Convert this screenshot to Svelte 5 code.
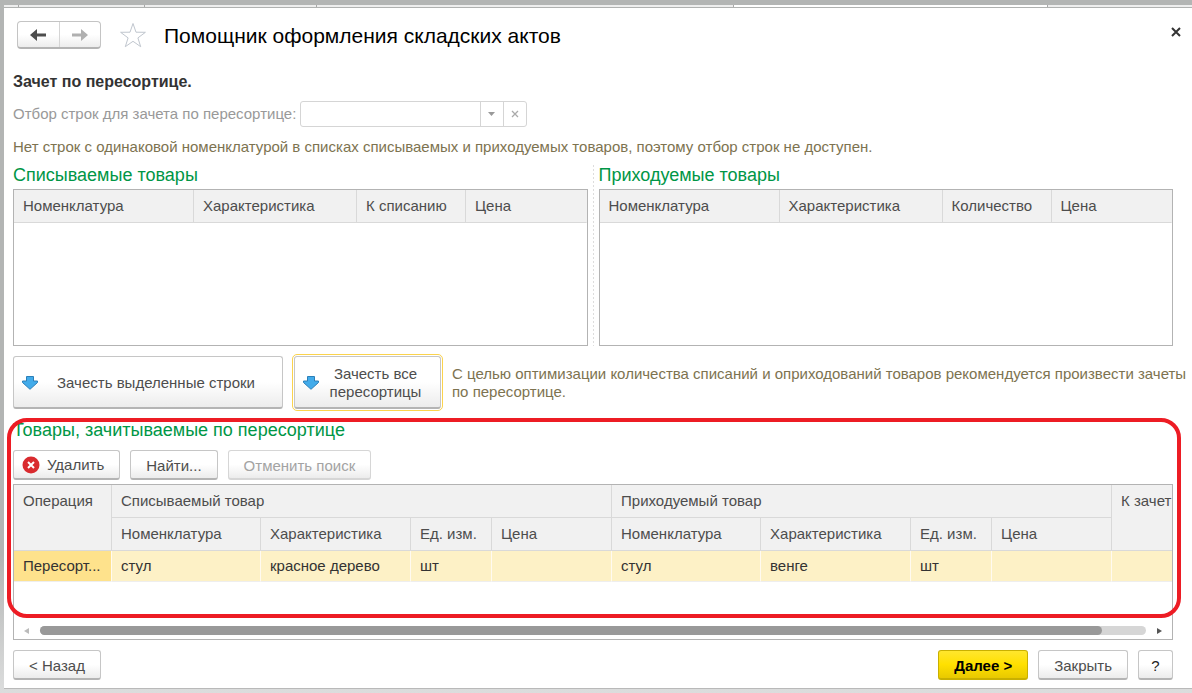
<script>
  const lists = [
    { title: 'Списываемые товары', cols: ['Номенклатура', 'Характеристика', 'К списанию', 'Цена'] },
    { title: 'Приходуемые товары', cols: ['Номенклатура', 'Характеристика', 'Количество', 'Цена'] }
  ];
  const sub = ['Номенклатура', 'Характеристика', 'Ед. изм.', 'Цена'];
  const row = ['Пересорт...', 'стул', 'красное дерево', 'шт', '', 'стул', 'венге', 'шт', '', ''];
</script>

{#snippet arrow()}
  <svg class="arrow" width="16" height="14" viewBox="0 0 16 14" aria-hidden="true">
    <path d="M4.500.5h7V5h4v1.500L8 13.300.5 6.500V5h4z" fill="#42abea" stroke="#2b7fb8" stroke-linejoin="round" />
  </svg>
{/snippet}

<div class="app">
  <div class="tabs" aria-hidden="true"><i></i><i></i><i></i><i></i><i></i></div>
  <main>
    <header>
      <div class="nav">
        <button aria-label="Назад">
          <svg width="16" height="12" viewBox="0 0 16 12"><path d="M0 6L7 0v4.400h9v3.200H7V12z" fill="#4d4d4d" /></svg>
        </button>
        <button aria-label="Вперед" disabled>
          <svg width="16" height="12" viewBox="0 0 16 12"><path d="M16 6L9 0v4.400H0v3.200h9V12z" fill="#b0b0b0" /></svg>
        </button>
      </div>
      <button class="plain star" aria-label="Избранное">
        <svg width="28" height="26" viewBox="0 0 28 26"><path d="M14 1.500l3 8.700 9.400.1-7.500 5.600 2.800 8.800L14 19.300l-7.700 5.400 2.800-8.800L1.600 10.300l9.400-.1z" fill="#fff" stroke="#c0c6ce" /></svg>
      </button>
      <h1>Помощник оформления складских актов</h1>
      <button class="plain close" aria-label="Закрыть окно">
        <svg width="10" height="10" viewBox="0 0 10 10"><path d="M1 1l8 8M9 1L1 9" stroke="#333" stroke-width="2" /></svg>
      </button>
    </header>

    <h2>Зачет по пересортице.</h2>
    <div class="filter">
      <label for="rows">Отбор строк для зачета по пересортице:</label>
      <div class="combo">
        <input id="rows" type="text" disabled />
        <button aria-label="Выбрать" disabled><svg width="8" height="4" viewBox="0 0 8 4"><path d="M0 0h7L3.500 4z" fill="#999" /></svg></button>
        <button aria-label="Очистить" disabled><svg width="8" height="8" viewBox="0 0 8 8"><path d="M1 1l6 6M7 1L1 7" stroke="#aaa" stroke-width="1.300" /></svg></button>
      </div>
    </div>
    <p class="note">Нет строк с одинаковой номенклатурой в списках списываемых и приходуемых товаров, поэтому отбор строк не доступен.</p>

    <div class="lists">
      {#each lists as list}
        <section>
          <h3>{list.title}</h3>
          <div class="grid upper">
            <table>
              <colgroup><col class="name" /><col class="feature" /><col class="count" /><col /></colgroup>
              <thead><tr>{#each list.cols as c}<th>{c}</th>{/each}</tr></thead>
            </table>
          </div>
        </section>
      {/each}
    </div>

    <div class="actions">
      <button class="btn big wide">{@render arrow()}<span>Зачесть выделенные строки</span></button>
      <button class="btn big focus">{@render arrow()}<span>Зачесть все пересортицы</span></button>
      <p class="note hint">С целью оптимизации количества списаний и оприходований товаров рекомендуется произвести зачеты по пересортице.</p>
    </div>

    <section class="result">
      <h3>Товары, зачитываемые по пересортице</h3>
      <div class="toolbar">
        <button class="btn delete">
          <svg width="18" height="18" viewBox="0 0 18 18" aria-hidden="true"><circle cx="9" cy="9" r="8.500" fill="#d92b2f" /><path d="M6 6l6 6M12 6l-6 6" stroke="#fff" stroke-width="2" /></svg>
          Удалить
        </button>
        <button class="btn">Найти...</button>
        <button class="btn" disabled>Отменить поиск</button>
      </div>
      <div class="grid lower">
        <div class="view">
          <table>
            <colgroup>
              <col class="op" />
              <col class="item" /><col class="kind" /><col class="unit" /><col class="price" />
              <col class="item" /><col class="kind" /><col class="unit" /><col class="price" />
              <col class="sum" />
            </colgroup>
            <thead>
              <tr>
                <th rowspan="2">Операция</th>
                <th colspan="4">Списываемый товар</th>
                <th colspan="4">Приходуемый товар</th>
                <th rowspan="2">К зачет</th>
              </tr>
              <tr>{#each [...sub, ...sub] as c}<th>{c}</th>{/each}</tr>
            </thead>
            <tbody><tr>{#each row as c}<td>{c}</td>{/each}</tr></tbody>
          </table>
        </div>
        <div class="scroll" aria-hidden="true">
          <svg width="5" height="6" viewBox="0 0 5 6"><path d="M5 0v6L0 3z" fill="#bbb" /></svg>
          <div class="track"><div class="thumb"></div></div>
          <svg width="5" height="6" viewBox="0 0 5 6"><path d="M0 0v6l5-3z" fill="#555" /></svg>
        </div>
      </div>
      <div class="mark"></div>
    </section>

    <footer>
      <button class="btn">&lt; Назад</button>
      <button class="btn primary">Далее &gt;</button>
      <button class="btn">Закрыть</button>
      <button class="btn help">?</button>
    </footer>
  </main>
</div>

<style>
  :global(body) {
    margin: 0;
    font-family: "Liberation Sans", Arial, sans-serif;
    font-size: 15px;
    line-height: 18px;
    color: #4d4d4d;
  }
  .app, .app * { box-sizing: border-box; }
  .app {
    min-height: 100vh;
    display: flex;
    flex-direction: column;
    padding: 5px 0 4px 4px;
    background: linear-gradient(#b3b5b4 80%, #dcdddd);
  }
  .tabs {
    display: grid;
    grid-template-columns: 15fr 126fr 172fr 417fr 314fr 144fr;
    height: 3px;
    background: #eee;
    border-bottom: 1px solid #b0b2b1;
  }
  .tabs i { border-right: 1px solid #a8a8a8; }
  .tabs i:nth-child(5) { background: #fff; }
  main {
    flex: 1;
    display: flex;
    flex-direction: column;
    padding: 13px 19px 8px 9px;
    background: #fff;
    border-bottom: 1px solid #b9b9b9;
  }
  h1, h2, h3, p { margin: 0; font-weight: 400; }
  button, input { font: inherit; color: inherit; }
  button { padding: 0; }
  header {
    display: flex;
    align-items: center;
    height: 28px;
    padding-left: 4px;
  }
  .nav {
    display: flex;
    width: 84px;
    height: 28px;
    border: 1px solid #c4c4c4;
    border-bottom: 2px solid #b4b4b4;
    border-radius: 4px;
    background: linear-gradient(#fff 50%, #ededed);
  }
  .nav button {
    flex: 1;
    display: grid;
    place-items: center;
    border: 0;
    background: none;
  }
  .nav button + button { border-left: 1px solid #d5d5d5; }
  .plain { display: grid; place-items: center; border: 0; background: none; }
  .star { margin: 0 17px 0 18px; }
  h1 { padding-top: 2px; font-size: 21px; line-height: 28px; color: #000; }
  .close { margin: -7px -8px 0 auto; }
  h2 { margin-top: 24px; font-size: 16px; line-height: 18px; font-weight: 700; color: #333; }
  .filter { display: flex; align-items: center; gap: 4px; margin-top: 10px; color: #999; }
  .combo {
    display: flex;
    width: 227px;
    height: 26px;
    border: 1px solid #d5d5d5;
    border-radius: 3px;
  }
  .combo input { flex: 1; min-width: 0; padding: 0 6px; border: 0; background: none; }
  .combo button {
    display: grid;
    place-items: center;
    width: 23px;
    border: 0;
    border-left: 1px solid #d5d5d5;
    background: none;
  }
  .note { color: #7d7350; }
  .filter + .note { margin-top: 11px; }
  .hint { flex: 1; margin-right: -19px; }
  h3 { font-size: 18px; line-height: 20px; color: #009646; }
  .lists {
    display: grid;
    grid-template-columns: 1fr 1fr;
    gap: 11px;
    margin-top: 9px;
    background: repeating-linear-gradient(#ddd 0 2px, transparent 2px 4px) center / 1px 100% no-repeat;
  }
  .grid { border: 1px solid #b3b3b3; background: #fff; }
  .upper { margin-top: 4px; min-height: 157px; }
  table { width: 100%; table-layout: fixed; border-collapse: separate; border-spacing: 0; }
  th, td {
    height: 33px;
    padding: 0 0 0 9px;
    text-align: left;
    font-weight: 400;
    white-space: nowrap;
    overflow: hidden;
  }
  th {
    padding-top: 7px;
    vertical-align: top;
    background: #f1f1f1;
    border-right: 1px solid #d9d9d9;
    border-bottom: 1px solid #d9d9d9;
  }
  th:last-child { border-right-color: #f1f1f1; }
  .lower thead tr + tr th { border-right-color: #d9d9d9; }
  .name { width: 180px; }
  .feature { width: 163px; }
  .count { width: 109px; }
  .btn {
    display: flex;
    align-items: center;
    justify-content: center;
    height: 30px;
    padding: 2px 15px 0;
    border: 1px solid #c6c6c6;
    border-bottom: 2px solid #b4b4b4;
    border-radius: 3px;
    background: linear-gradient(#fff 50%, #ececec);
    white-space: nowrap;
  }
  .btn:disabled { color: #a3a3a3; border-color: #d6d6d6; }
  .actions { display: flex; align-items: center; gap: 11px; margin-top: 10px; }
  .big { flex: none; height: 53px; padding: 2px 8px 0; }
  .big .arrow { flex: none; }
  .big span { flex: 1; white-space: normal; }
  .wide { width: 270px; }
  .focus { width: 147px; outline: 1px solid #fbd34d; outline-offset: 1px; }
  .result {
    position: relative;
    flex: 1;
    display: flex;
    flex-direction: column;
    margin-top: 11px;
  }
  .toolbar { display: flex; gap: 10px; margin-top: 10px; }
  .delete { gap: 7px; padding: 1px 15px 0 8px; }
  .lower { flex: 1; display: flex; flex-direction: column; margin-top: 4px; min-height: 156px; }
  .view { flex: 1; overflow: hidden; }
  .lower table { width: 1198px; }
  .op { width: 98px; }
  .item { width: 149px; }
  .kind { width: 150px; }
  .unit { width: 81px; }
  .price { width: 120px; }
  .sum { width: 100px; }
  td {
    height: 31px;
    color: #333;
    background: #fdf1c6;
    border-right: 1px solid #fffaf0;
    border-bottom: 1px solid #eee;
  }
  td:first-child { background: #fee28c; }
  .scroll {
    display: flex;
    align-items: center;
    gap: 11px;
    height: 17px;
    padding: 0 10px;
  }
  .track { flex: 1; height: 9px; border-radius: 5px; background: #d6d6d6; }
  .thumb { width: 96%; height: 9px; border-radius: 5px; background: #999; }
  .mark {
    position: absolute;
    inset: -2px -8px 22px -6px;
    border: 4px solid #ed1c24;
    border-radius: 20px;
    pointer-events: none;
  }
  footer { display: flex; gap: 10px; margin-top: 10px; }
  footer .btn:first-child { margin-right: auto; }
  .primary {
    font-weight: 700;
    color: #000;
    border-color: #c9b000;
    background: linear-gradient(#ffe62e, #ffe000 50%, #e8c900);
  }
  .help { width: 35px; padding: 2px 0 0; color: #222; }
</style>
